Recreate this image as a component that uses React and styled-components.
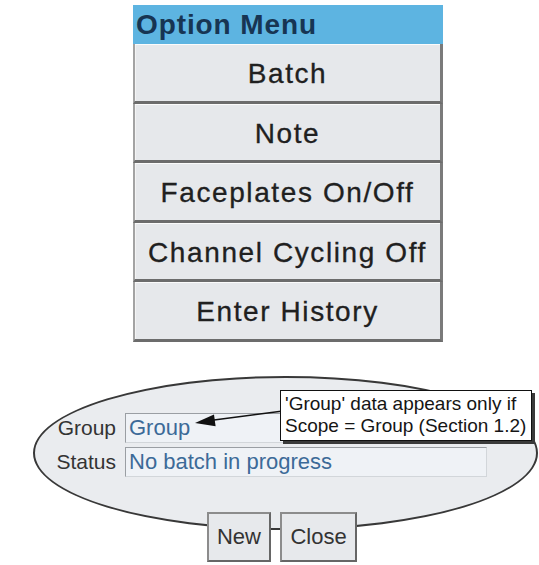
import React from 'react';
import styled, { createGlobalStyle } from 'styled-components';

const GlobalStyle = createGlobalStyle`
	body {
		margin: 0;
		background: #ffffff;
		font-family: "Liberation Sans", Arial, sans-serif;
		overflow: hidden;
	}
`;

const Page = styled.div`
	display: flex;
	flex-direction: column;
	padding-top: 5px;
`;

const Menu = styled.div`
	display: flex;
	flex-direction: column;
	width: 310px;
	margin-left: 133px;
`;

const MenuTitle = styled.div`
	height: 39px;
	line-height: 39px;
	padding-left: 3px;
	background: #5db4e1;
	color: #173553;
	font-size: 28px;
	font-weight: bold;
	letter-spacing: 0.9px;
`;

const MenuItem = styled.div`
	box-sizing: border-box;
	height: 59.5px;
	padding-top: 4px;
	display: flex;
	align-items: center;
	justify-content: center;
	background: #e6e8eb;
	border-left: 2px solid #a3a3a3;
	border-right: 3px solid #7a7a7a;
	border-bottom: 3px solid #6c6c6c;
	box-shadow: inset 0 1px 0 #fbfbfb, inset 1px 0 0 #f4f4f4;
	color: #202020;
	font-size: 28px;
	letter-spacing: 1.6px;
	-webkit-text-stroke: 0.3px #202020;
`;

const Panel = styled.div`
	position: relative;
	box-sizing: border-box;
	width: 505px;
	height: 154px;
	margin: 34px 0 0 33px;
	padding-top: 35px;
	background: #eaecef;
	border: 2px solid #383838;
	border-radius: 50%;
`;

const Form = styled.div`
	display: grid;
	grid-template-columns: 83px 362px;
	column-gap: 7px;
	row-gap: 4px;
`;

const Label = styled.div`
	height: 30px;
	line-height: 30px;
	text-align: right;
	padding-right: 2px;
	color: #333333;
	font-size: 21px;
`;

const Field = styled.div`
	box-sizing: border-box;
	height: 30px;
	line-height: 28px;
	padding-left: 3px;
	background: #eff2f6;
	border: 1px solid #d2d6da;
	border-top-color: #9a9ea3;
	border-left-color: #9a9ea3;
	color: #3c6a98;
	font-size: 22px;
`;

const Callout = styled.div`
	position: absolute;
	left: 245px;
	top: 12px;
	width: 252px;
	box-sizing: border-box;
	padding: 2px 4px 3px;
	background: #ffffff;
	border: 1px solid #111111;
	box-shadow: 3px 3px 0 #3a3a3a;
	color: #151515;
	font-size: 19px;
	line-height: 22px;
	white-space: nowrap;
`;

const Arrow = styled.svg`
	position: absolute;
	left: 155px;
	top: 27px;
`;

const Buttons = styled.div`
	position: relative;
	display: flex;
	gap: 9px;
	margin: -18px 0 0 207px;
`;

const Button = styled.div`
	box-sizing: border-box;
	width: ${p => p.$width}px;
	height: 50px;
	display: flex;
	align-items: center;
	justify-content: center;
	background: #e7e9ec;
	border: 2px solid #8c8c8c;
	border-right-color: #666666;
	border-bottom-color: #666666;
	color: #333333;
	font-size: 22px;
`;

const items = ['Batch', 'Note', 'Faceplates On/Off', 'Channel Cycling Off', 'Enter History'];

export default function App() {
	return (
		<Page>
			<GlobalStyle />
			<Menu>
				<MenuTitle>Option Menu</MenuTitle>
				{items.map(item => <MenuItem key={item}>{item}</MenuItem>)}
			</Menu>

			<Panel>
				<Form>
					<Label>Group</Label>
					<Field>Group</Field>
					<Label>Status</Label>
					<Field>No batch in progress</Field>
				</Form>

				<Arrow width="95" height="25" viewBox="0 0 95 25">
					<line x1="24" y1="15" x2="93" y2="6" stroke="#111" strokeWidth="1.5" />
					<polygon points="5,18 25.6,21.2 24,9.4" fill="#111" />
				</Arrow>

				<Callout>
					'Group' data appears only if<br />
					Scope = Group (Section 1.2)
				</Callout>
			</Panel>

			<Buttons>
				<Button $width={64}>New</Button>
				<Button $width={77}>Close</Button>
			</Buttons>
		</Page>
	);
}
